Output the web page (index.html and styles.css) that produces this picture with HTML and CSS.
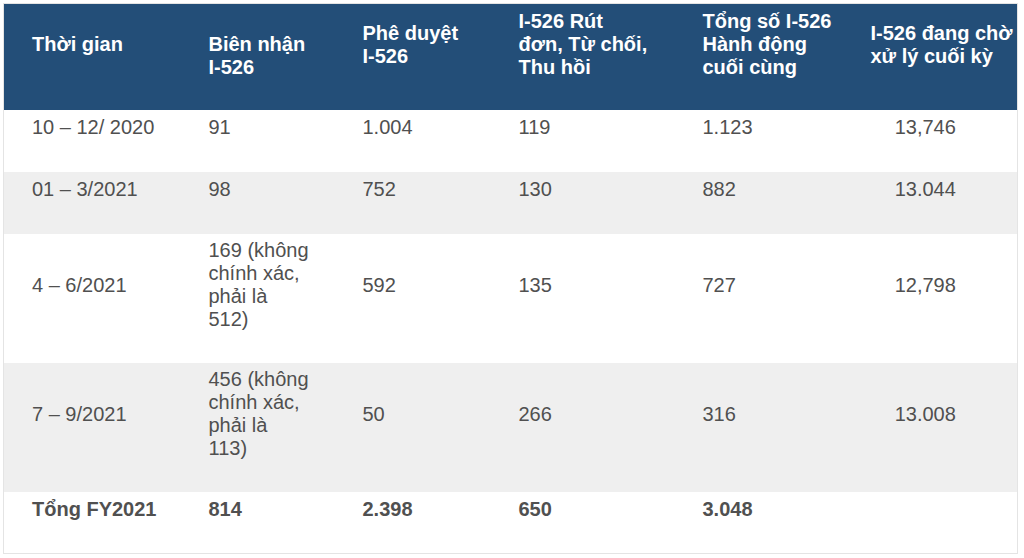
FILE: index.html
```html
<!DOCTYPE html>
<html lang="vi">
<head>
<meta charset="utf-8">
<title>I-526</title>
<link rel="stylesheet" href="styles.css">
</head>
<body>
<table class="stats">
  <colgroup>
    <col class="c1"><col class="c2"><col class="c3"><col class="c4"><col class="c5"><col class="c6">
  </colgroup>
  <thead>
    <tr>
      <th>Thời gian</th>
      <th class="lower">Biên nhận I-526</th>
      <th>Phê duyệt I-526</th>
      <th class="narrow">I-526 Rút đơn, Từ chối, Thu hồi</th>
      <th class="wide">Tổng số I-526 Hành động cuối cùng</th>
      <th class="last">I-526 đang chờ xử lý cuối kỳ</th>
    </tr>
  </thead>
  <tbody>
    <tr class="short">
      <td>10 – 12/ 2020</td><td>91</td><td>1.004</td><td>119</td><td>1.123</td><td class="num">13,746</td>
    </tr>
    <tr class="short alt">
      <td>01 – 3/2021</td><td>98</td><td>752</td><td>130</td><td>882</td><td class="num">13.044</td>
    </tr>
    <tr class="tall">
      <td>4 – 6/2021</td><td>169 (không chính xác, phải là 512)</td><td>592</td><td>135</td><td>727</td><td class="num">12,798</td>
    </tr>
    <tr class="tall alt">
      <td>7 – 9/2021</td><td>456 (không chính xác, phải là 113)</td><td>50</td><td>266</td><td>316</td><td class="num">13.008</td>
    </tr>
    <tr class="short total">
      <td>Tổng FY2021</td><td>814</td><td>2.398</td><td>650</td><td>3.048</td><td class="num"></td>
    </tr>
  </tbody>
</table>
</body>
</html>
```
FILE: styles.css
```css
html, body {
  margin: 0;
  padding: 0;
  background: #ffffff;
}

body {
  padding: 3px 0 0 3px;
  font-family: "Liberation Sans", Arial, sans-serif;
}

.stats {
  border-collapse: collapse;
  table-layout: fixed;
  width: 1014px;
  border: 1px solid #e4e4e4;
  font-size: 20px;
  line-height: 23px;
  color: #505050;
}

.c1 { width: 177px; }
.c2 { width: 154px; }
.c3 { width: 156px; }
.c4 { width: 184px; }
.c5 { width: 168px; }
.c6 { width: 175px; }

.stats thead tr {
  height: 106px;
  background: #234e78;
}

.stats th {
  color: #ffffff;
  font-weight: bold;
  text-align: left;
  vertical-align: middle;
  padding: 0 24px 24px 28px;
}

.stats th.lower {
  padding-top: 23px;
}

.stats th.narrow {
  padding-right: 26px;
}

.stats th.wide {
  padding-right: 8px;
}

.stats th.last {
  padding-right: 0;
}

.stats td {
  text-align: left;
  vertical-align: middle;
  padding: 4px 23px 30px 28px;
}

.stats td.num {
  text-align: center;
  padding-left: 0;
  padding-right: 9px;
}

.stats tr.short {
  height: 62px;
}

.stats tr.tall {
  height: 129px;
}

.stats tr.alt {
  background: #efefef;
}

.stats tr.total td {
  font-weight: bold;
}
```
